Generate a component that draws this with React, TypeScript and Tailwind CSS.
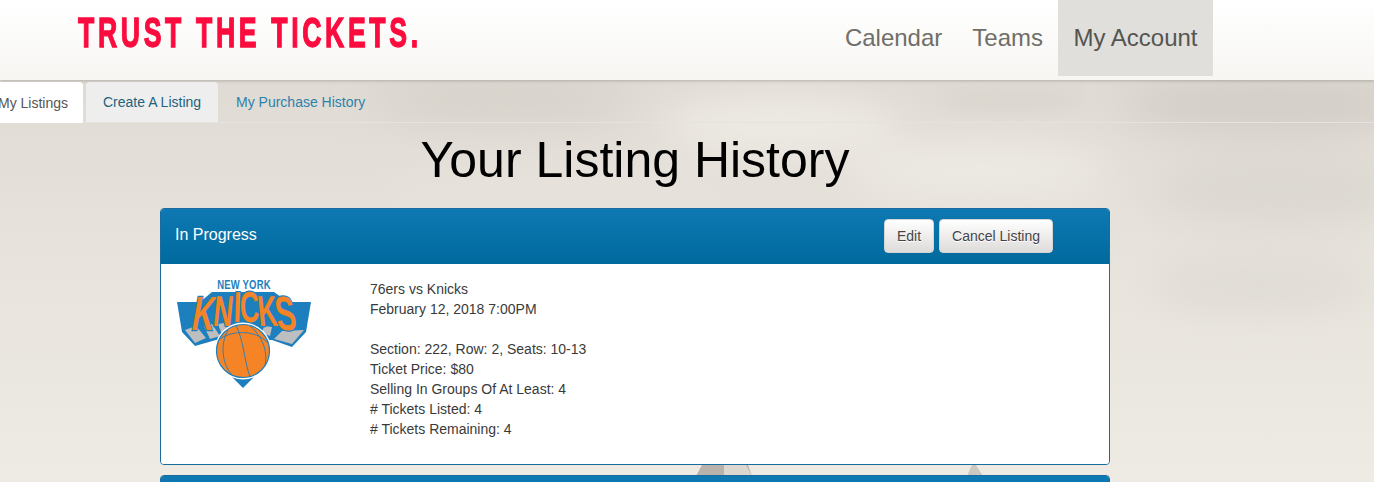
import React from "react";

function Background() {
  return (
    <svg className="absolute inset-0 w-full h-full" viewBox="0 0 1374 482" preserveAspectRatio="none" aria-hidden="true">
      <defs>
        <linearGradient id="sky" x1="0" y1="0" x2="0" y2="1">
          <stop offset="0.16" stopColor="#dfdad3" />
          <stop offset="0.45" stopColor="#e6e2db" />
          <stop offset="1" stopColor="#eeeae4" />
        </linearGradient>
        <filter id="b1" x="-30%" y="-60%" width="160%" height="220%"><feGaussianBlur stdDeviation="20" /></filter>
        <filter id="b2" x="-30%" y="-60%" width="160%" height="220%"><feGaussianBlur stdDeviation="9" /></filter>
      </defs>
      <rect width="1374" height="482" fill="url(#sky)" />
      <g filter="url(#b1)">
        <ellipse cx="500" cy="100" rx="130" ry="20" fill="#d6d0c9" />
        <ellipse cx="1270" cy="105" rx="150" ry="26" fill="#d2cdc6" />
        <ellipse cx="1280" cy="190" rx="130" ry="35" fill="#dcd8d1" />
        <ellipse cx="1260" cy="285" rx="110" ry="24" fill="#dfdbd4" />
        <ellipse cx="780" cy="125" rx="120" ry="30" fill="#eeeae4" />
        <ellipse cx="980" cy="170" rx="130" ry="26" fill="#eeeae4" />
        <ellipse cx="560" cy="190" rx="170" ry="18" fill="#e7e3dc" />
      </g>
      <g filter="url(#b2)">
        <ellipse cx="1010" cy="100" rx="70" ry="11" fill="#dad5ce" />
      </g>
      <path d="M702 465 L748 465 L752 476 L696 476 Z" fill="#b9b3ab" />
      <path d="M724 465 L746 465 L752 476 L724 476 Z" fill="#dcd8d0" />
      <path d="M972 465 L976 465 L983 476 L967 476 Z" fill="#cdc8c0" />
    </svg>
  );
}

function KnicksLogo() {
  const letters: [string, number, number, number, number][] = [
    ["K", 41, 66, -16, 30],
    ["N", 62, 62, -9, 27],
    ["I", 77, 58, -3, 27],
    ["C", 90, 58, 3, 27],
    ["K", 109, 62, 9, 27],
    ["S", 128, 66, 14, 30],
  ];
  return (
    <svg width="140" height="116" viewBox="14 11 140 116" aria-label="New York Knicks">
      <polygon points="17,38 40,38 52,28 114,28 128,38 151,38 146,68 132,83 112,76 56,76 35,82 22,68" fill="#1d7fbe" />
      <polygon points="71,112 95,112 83,124" fill="#1d7fbe" />
      <g fill="#bcbec0">
        <polygon points="25,66 36,62 46,74 35,79" />
        <polygon points="44,62 52,60 60,72 50,75" />
        <polygon points="58,60 64,59 70,67 62,71" />
        <polygon points="122,67 144,66 132,80 114,75" />
        <polygon points="104,62 112,63 110,72 102,69" />
      </g>
      {letters.map(([ch, x, y, s, size], i) => (
        <text
          key={i}
          transform={`translate(${x} ${y}) scale(1 1.6) skewX(${s})`}
          textAnchor="middle"
          fontFamily="'Liberation Sans', sans-serif"
          fontWeight="700"
          fontSize={size}
          fill="#f58426"
          stroke="#1d7fbe"
          strokeWidth="1.6"
          paintOrder="stroke"
        >
          {ch}
        </text>
      ))}
      <text transform="translate(84 25) scale(1 1.35)" textAnchor="middle" fontFamily="'Liberation Sans', sans-serif" fontWeight="700" fontSize="9.5" letterSpacing="0.2" fill="#1d7fbe">
        NEW YORK
      </text>
      <circle cx="83" cy="87" r="28.5" fill="#ffffff" />
      <circle cx="83" cy="87" r="26.5" fill="#f58426" stroke="#1d7fbe" strokeWidth="1.2" />
      <g fill="none" stroke="#1d7fbe" strokeWidth="0.9">
        <path d="M60 75 C72 66 96 66 107 78" />
        <path d="M68 66 C60 80 62 100 72 111" />
        <path d="M76 61 C84 78 84 96 90 113" />
        <path d="M90 62 C102 72 108 86 105 102" />
      </g>
    </svg>
  );
}

function Panel({ children, header }: { children?: React.ReactNode; header: React.ReactNode }) {
  return (
    <section className="w-[950px] rounded-[4px] border border-[#1a6c9f] overflow-hidden">
      <div className="h-[55px] bg-gradient-to-b from-[#0e79b2] to-[#006a9e] text-white flex items-center">{header}</div>
      {children}
    </section>
  );
}

const Btn = ({ label }: { label: string }) => (
  <button className="h-[34px] px-[12px] rounded-[4px] border border-[#d5d5d5] bg-gradient-to-b from-white to-[#dedcda] text-[14px] text-[#444] [text-shadow:0_1px_0_#fff]">
    {label}
  </button>
);

export default function App() {
  return (
    <div className="relative h-[482px] w-full overflow-hidden font-['Liberation_Sans',Arial,sans-serif] text-[14px] leading-[20px] text-[#3a3a3a]">
      <Background />
      <div className="relative">
        <header className="h-20 bg-gradient-to-b from-white to-[#f7f6f3] shadow-[0_1px_3px_rgba(0,0,0,0.2)] flex items-start justify-between pl-[78px] pr-[161px]">
          <span className="inline-block origin-left scale-x-[0.635] mt-[10px] text-[#fb0b3e] font-bold text-[42px] leading-[46px] tracking-[5.7px] whitespace-nowrap [-webkit-text-stroke:1.3px_#fb0b3e]">
            TRUST THE TICKETS.
          </span>
          <nav className="flex h-[76px] text-[24px] text-[#6f6e68]">
            <a className="px-[15px] flex items-center">Calendar</a>
            <a className="px-[15px] flex items-center">Teams</a>
            <a className="w-[155px] justify-center flex items-center bg-[#e0dfdb] text-[#555550]">My Account</a>
          </nav>
        </header>

        <div className="mt-[2px] h-[41px] border-b border-[#e6e3de] flex -ml-[17px]">
          <a className="h-[41px] px-[15px] flex items-center bg-white text-[#555] rounded-t-[4px]">My Listings</a>
          <a className="ml-[3px] h-[40px] w-[132px] justify-center flex items-center bg-[#eeeeee] text-[#23627c] rounded-t-[4px]">Create A Listing</a>
          <a className="ml-[18px] h-[40px] flex items-center text-[#2b82ad]">My Purchase History</a>
        </div>

        <main className="ml-[160px] w-[950px]">
          <h1 className="h-[85px] pt-[8px] text-center text-[50px] leading-[58px] text-black">Your Listing History</h1>
          <div className="flex flex-col gap-[10px]">
            <Panel
              header={
                <div className="w-full flex items-center justify-between pl-[14px] pr-[56px] -mt-[1px]">
                  <h2 className="text-[16px] leading-[18px] text-white -mt-[2px]">In Progress</h2>
                  <div className="flex gap-[5px]">
                    <Btn label="Edit" />
                    <Btn label="Cancel Listing" />
                  </div>
                </div>
              }
            >
              <div className="h-[200px] bg-white flex">
                <div className="w-[209px] pl-[13px] pt-[11px]">
                  <KnicksLogo />
                </div>
                <div className="pt-[15px]">
                  <p>76ers vs Knicks</p>
                  <p>February 12, 2018 7:00PM</p>
                  <p className="mt-[20px]">Section: 222, Row: 2, Seats: 10-13</p>
                  <p>Ticket Price: $80</p>
                  <p>Selling In Groups Of At Least: 4</p>
                  <p># Tickets Listed: 4</p>
                  <p># Tickets Remaining: 4</p>
                </div>
              </div>
            </Panel>
            <Panel header={null} />
          </div>
        </main>
      </div>
    </div>
  );
}
